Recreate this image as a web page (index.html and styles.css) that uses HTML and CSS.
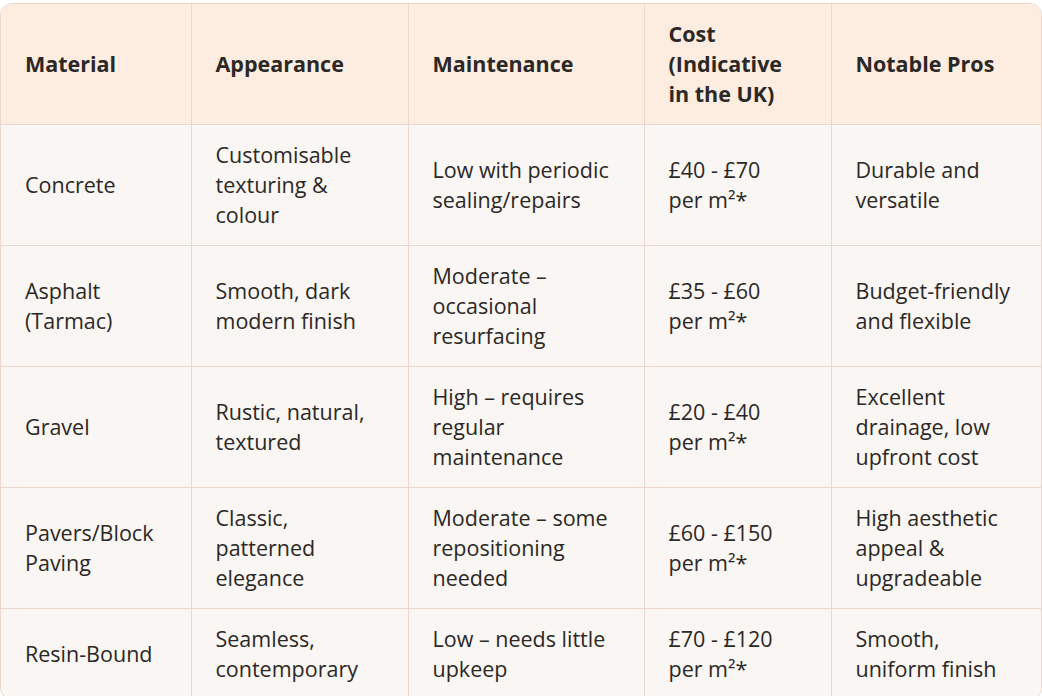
FILE: index.html
```html
<!DOCTYPE html>
<html lang="en">
<head>
<meta charset="utf-8">
<title>Driveway materials</title>
<link rel="stylesheet" href="styles.css">
</head>
<body>
<div class="table-wrap">
  <table class="compare">
    <colgroup>
      <col class="c1"><col class="c2"><col class="c3"><col class="c4"><col class="c5">
    </colgroup>
    <thead>
      <tr>
        <th>Material</th>
        <th>Appearance</th>
        <th>Maintenance</th>
        <th>Cost (Indicative in the UK)</th>
        <th>Notable Pros</th>
      </tr>
    </thead>
    <tbody>
      <tr>
        <td>Concrete</td>
        <td>Customisable texturing &amp; colour</td>
        <td>Low with periodic sealing/repairs</td>
        <td>£40 - £70 <span class="unit">per m²*</span></td>
        <td>Durable and versatile</td>
      </tr>
      <tr>
        <td>Asphalt (Tarmac)</td>
        <td>Smooth, dark modern finish</td>
        <td>Moderate – occasional resurfacing</td>
        <td>£35 - £60 <span class="unit">per m²*</span></td>
        <td>Budget-friendly and flexible</td>
      </tr>
      <tr>
        <td>Gravel</td>
        <td>Rustic, natural, textured</td>
        <td>High – requires regular maintenance</td>
        <td>£20 - £40 <span class="unit">per m²*</span></td>
        <td>Excellent drainage, low upfront cost</td>
      </tr>
      <tr>
        <td>Pavers/Block Paving</td>
        <td>Classic, patterned elegance</td>
        <td>Moderate – some repositioning needed</td>
        <td>£60 - £150 <span class="unit">per m²*</span></td>
        <td>High aesthetic appeal &amp; upgradeable</td>
      </tr>
      <tr>
        <td>Resin-Bound</td>
        <td>Seamless, contemporary</td>
        <td>Low – needs little upkeep</td>
        <td>£70 - £120 <span class="unit">per m²*</span></td>
        <td>Smooth, uniform finish</td>
      </tr>
    </tbody>
  </table>
</div>
</body>
</html>
```
FILE: styles.css
```css
html, body {
  margin: 0;
  padding: 0;
  background: #ffffff;
}
body {
  padding-top: 3px;
  font-family: "Open Sans", "Noto Sans", sans-serif;
  color: #2b2826;
}
.table-wrap {
  width: 1042px;
  box-sizing: border-box;
  border: 1px solid #ead8cc;
  border-radius: 12px;
  overflow: hidden;
  background: #faf6f3;
}
.compare {
  width: 100%;
  table-layout: fixed;
  border-collapse: collapse;
  font-size: 21.5px;
  line-height: 30px;
}
.c1 { width: 190px; }
.c2 { width: 217px; }
.c3 { width: 236px; }
.c4 { width: 187px; }
.c5 { width: auto; }
.compare th,
.compare td {
  padding: 15px 24px 15px 24px;
  text-align: left;
  vertical-align: middle;
  border-right: 1px solid #ead8cc;
  border-bottom: 1px solid #ead8cc;
}
.compare th:last-child,
.compare td:last-child {
  border-right: none;
}
.compare tbody tr:last-child td {
  border-bottom: none;
}
.compare th {
  background: #fdede0;
  font-weight: 700;
  color: #2b2826;
}
.compare td {
  font-weight: 400;
}
.unit {
  white-space: nowrap;
}
```
